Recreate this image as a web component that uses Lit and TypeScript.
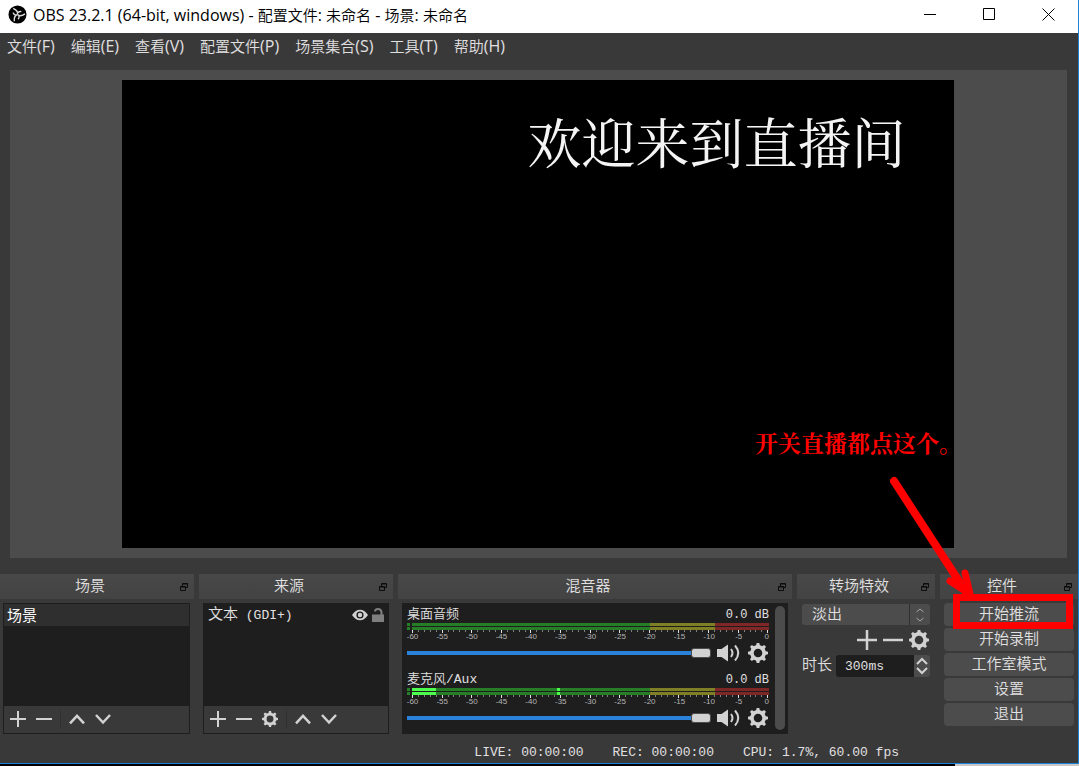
import { LitElement, html, svg, css } from "lit";
import { customElement, property } from "lit/decorators.js";

const icons = {
  plus: html`<svg class="ic" viewBox="0 0 16 16"><path d="M8 0v16M0 8h16" /></svg>`,
  minus: html`<svg class="ic" viewBox="0 0 16 16"><path d="M0 8h16" /></svg>`,
  up: html`<svg class="ic" viewBox="0 0 16 16"><path d="M1 12.300l7-7.500 7 7.500" stroke-width="2.500" /></svg>`,
  down: html`<svg class="ic" viewBox="0 0 16 16"><path d="M1 4l7 7.500 7-7.500" stroke-width="2.500" /></svg>`,
  gear: html`<svg class="ic" viewBox="0 0 20 20">
    <circle cx="10" cy="10" r="6.100" stroke-width="3.600" />
    ${[0, 45, 90, 135, 180, 225, 270, 315].map(
      (a) => svg`<path class="fill" d="M8.700 0h2.600l.9 4h-4.400z" transform="rotate(${a} 10 10)" />`
    )}
  </svg>`,
  speaker: html`<svg class="ic wide" viewBox="0 0 24 20">
    <path class="fill" d="M0 6h4.500L11 1.500v17L4.500 14H0z" />
    <path d="M14 6q3 4 0 8M18 2.500q6.500 7.500 0 15" />
  </svg>`,
  eye: html`<svg class="ic" viewBox="0 0 16 16">
    <path class="fill" fill-rule="evenodd" d="M0 8q3.500-5.300 8-5.300t8 5.300q-3.500 5.300-8 5.300T0 8zM8 4.400a3.600 3.600 0 100 7.200 3.600 3.600 0 100-7.200z" />
    <circle class="fill" cx="8" cy="8" r="2.200" />
  </svg>`,
  lock: html`<svg class="ic dim" viewBox="0 0 14 16">
    <path class="fill" d="M1 7.500h12V15H1z" /><path d="M4 4.500Q4 2 7 2t3.500 3v3" />
  </svg>`,
  float: html`<svg class="float" viewBox="0 0 8 8">
    <path d="M2.500 3V.500h5v4H6M2.500 1h5M.500 3.500h5v4h-5zM.500 4h5" />
  </svg>`,
};

const shared = css`
  * { box-sizing: border-box; }
  button {
    font: inherit; color: inherit; border: 0; padding: 0; background: none;
    display: flex; align-items: center; justify-content: center;
  }
  .ic { display: block; width: 16px; height: 16px; fill: none; stroke: #d2d2d2; stroke-width: 2; overflow: visible; }
  .ic .fill { fill: #d2d2d2; stroke: none; }
  .ic.dim { width: 14px; stroke: #7f7f7f; }
  .ic.dim .fill { fill: #7f7f7f; }
  .big .ic { width: 20px; height: 20px; }
  .big .ic.wide { width: 24px; }
`;

@customElement("obs-dock")
class ObsDock extends LitElement {
  @property() heading = "";
  static styles = [shared, css`
    :host { display: flex; flex-direction: column; min-width: 0; }
    header {
      display: flex; align-items: center; height: 25px; padding-right: 6px;
      background: linear-gradient(#484848, #434343); margin-bottom: 4px;
    }
    h2 { flex: 1; margin: 0; padding-top: 2px; font-size: 15px; font-weight: inherit; text-align: center; }
    .float { display: block; width: 8px; height: 8px; fill: none; stroke: #0c0c0c; }
    .body { flex: 1; display: flex; flex-direction: column; }
  `];
  render() {
    return html`<header><h2>${this.heading}</h2><button aria-label="浮动">${icons.float}</button></header>
      <div class="body"><slot></slot></div>`;
  }
}

@customElement("obs-channel")
class ObsChannel extends LitElement {
  @property() name = "";
  @property({ type: Number }) level = 0;
  @property({ type: Number }) peak = 0;
  static styles = [shared, css`
    :host { display: block; height: 65px; }
    .top { display: flex; justify-content: space-between; height: 20px; padding-top: 2px; font-size: 13px; line-height: 20px; }
    .db { font-size: 12px; }
    .meter { display: grid; grid-template-columns: 3px 1fr; column-gap: 2px; row-gap: 1px; }
    .cap { height: 3px; background: #267f26; }
    .bar {
      position: relative; height: 3px;
      background: linear-gradient(90deg, #267f26 66.667%, #7f7f26 66.667% 85%, #7f2626 85%);
    }
    .level, .peak { position: absolute; top: 0; height: 3px; background: #4cff4c; }
    .level { left: 0; }
    .peak { width: 3px; }
    .ticks { display: flex; justify-content: space-between; align-items: flex-start; margin-left: 5px; height: 3px; }
    .tick { width: 1px; height: 2px; background: #808080; }
    .tick.major { height: 3px; background: #e1e0e1; }
    .marks { display: flex; justify-content: space-between; margin-left: 5px; height: 8px; font: 8px/8px "Liberation Sans", sans-serif; color: #b4b4b4; }
    .mark { width: 1px; display: flex; justify-content: center; white-space: nowrap; }
    .mark:last-child { justify-content: flex-end; }
    .ctl { display: flex; align-items: center; height: 20px; margin-top: 2px; }
    input { appearance: none; flex: 1; min-width: 0; margin: 0 6px 0 0; height: 10px; background: linear-gradient(#2a82da, #2a82da) center / 100% 4px no-repeat; border-radius: 2px; }
    input::-webkit-slider-thumb { appearance: none; width: 20px; height: 10px; background: #d2d2d2; border: 1px solid #4c4c4c; border-radius: 3px; }
    .gear { margin: 0 1px 0 7px; }
  `];
  render() {
    return html`
      <div class="top"><label for="vol">${this.name}</label><span class="db">0.0 dB</span></div>
      <div class="meter">
        ${[0, 1].map(() => html`<div class="cap"></div><div class="bar">
          ${this.level ? html`<div class="level" style="width:${this.level}%"></div>
            <div class="peak" style="left:${this.peak}%"></div>` : ""}
        </div>`)}
      </div>
      <div class="ticks">${Array.from({ length: 61 }, (_, i) => html`<i class="tick ${i % 5 ? "" : "major"}"></i>`)}</div>
      <div class="marks">${Array.from({ length: 13 }, (_, i) => html`<span class="mark">${i * 5 - 60}</span>`)}</div>
      <div class="ctl big">
        <input id="vol" type="range" min="0" max="100" value="100" />
        <button aria-label="静音">${icons.speaker}</button>
        <button class="gear" aria-label="设置">${icons.gear}</button>
      </div>`;
  }
}

/* Wraps the Latin runs of a mixed string so that they can be sized apart from the Chinese ones. */
const mixed = (text: string) =>
  text.split(/([\x20-\x7e]+)/).filter(Boolean).map((run) => (/^[\x20-\x7e]/.test(run) ? html`<span class="ui-latin">${run}</span>` : run));

@customElement("app-root")
class AppRoot extends LitElement {
  static styles = [shared, css`
    :host {
      display: flex; flex-direction: column; height: 100vh; overflow: hidden; position: relative;
      background: #000; color: #e1e0e1; font: 350 15px/20px "Liberation Mono", "Noto Sans CJK SC", monospace;
    }
    .window { flex: 1; min-height: 0; display: flex; flex-direction: column; background: #3a393a; border-right: 1px solid #1a81d4; border-bottom: 1px solid #1a81d4; }
    .title { display: flex; align-items: center; height: 33px; padding: 0 23px 4px 8px; background: #fff; color: #000; font-family: "Noto Sans", "Noto Sans CJK SC", sans-serif; }
    h1 { flex: 1; margin: 0 0 0 6px; font-size: 15px; line-height: 20px; font-weight: 350; white-space: pre; }
    .ui-latin { font-size: 16px; line-height: 16px; font-family: "Open Sans", sans-serif; font-weight: 400; }
    .logo { width: 19px; height: 19px; }
    .wins { display: flex; gap: 46px; }
    .wins svg { display: block; width: 13px; height: 13px; fill: none; stroke: #000; }
    .menu { display: flex; gap: 16px; padding: 3px 7px; height: 37px; font-family: "Noto Sans", "Noto Sans CJK SC", sans-serif; }
    .menu button { display: block; height: 20px; white-space: nowrap; }
    .preview { flex: 1; min-height: 0; margin: 0 11px 16px 10px; padding: 10px 12px 10px 10px; background: #4c4c4c; display: flex; justify-content: center; }
    .canvas { height: 100%; aspect-ratio: 16 / 9; background: #000; padding: 31px 48px; text-align: right; font: 400 54px/60px "Noto Serif CJK SC", "Noto Sans CJK SC", serif; color: #f4f4f4; }
    .docks { display: grid; grid-template-columns: 194fr 194fr 394fr 138fr 138fr; gap: 5px; }
    .panel { flex: 1; display: flex; flex-direction: column; margin: 0 4px 0 3px; border: 1px solid #1f1e1f; background: #1f1e1f; }
    .sources { margin: 0 4px; }
    .row { display: flex; align-items: center; height: 22px; padding: 0 4px; }
    .row.on { padding: 0 3px; background: #2f2f2f; color: #fff; font-family: "Noto Sans CJK SC", sans-serif; font-weight: 400; }
    .row .label { flex: 1; padding-top: 2px; white-space: pre; }
    .latin { font-size: 13px; }
    .row .ic.dim { margin-left: 3px; }
    .sources .row { padding-right: 3px; }
    .tools { margin-top: auto; display: flex; align-items: center; height: 27px; padding: 0 0 1px 6px; gap: 10px; background: #3a393a; }
    .sep { width: 1px; height: 19px; background: #303030; margin: 0 -2px; }
    .mixer { flex: 1; display: flex; gap: 6px; margin: 0 4px; padding: 0 3px 0 5px; background: #1f1e1f; }
    .channels { flex: 1; min-width: 0; height: 131px; }
    .scroll { width: 10px; margin: 3px 0 4px; border-radius: 5px; background: #4c4c4c; }
    .trans { display: flex; flex-direction: column; padding: 1px 5px; }
    .combo { display: flex; position: relative; }
    select { appearance: none; width: 100%; height: 21px; border: 0; border-radius: 3px; padding: 2px 10px 0; font: inherit; color: inherit; background: linear-gradient(90deg, #303030, #303030) right 20px top / 1px 100% no-repeat #4c4c4c; }
    .arrows { position: absolute; right: 6px; top: 4px; width: 8px; height: 14px; fill: none; stroke: #a8a8a8; pointer-events: none; }
    .tbtns { display: flex; justify-content: flex-end; gap: 6px; margin: 5px 0; padding-right: 1px; }
    .dur { display: flex; align-items: center; gap: 4px; position: relative; }
    .dur label { padding-top: 2px; }
    .dur input { flex: 1; min-width: 0; width: 0; height: 22px; border: 0; border-radius: 3px; padding: 0 9px; font: inherit; font-size: 13px; color: inherit; background: linear-gradient(#4c4c4c, #4c4c4c) right / 16px 100% no-repeat #1f1e1f; }
    .spin { position: absolute; right: 2px; top: 2px; width: 12px; height: 18px; fill: none; stroke: #d2d2d2; stroke-width: 2; }
    .ctrls { display: flex; flex-direction: column; gap: 2px; padding: 0 4px; }
    .ctrls button { height: 23px; padding-top: 2px; background: #4c4c4c; border-radius: 4px; }
    .status { display: flex; justify-content: flex-end; gap: 29px; height: 29px; padding: 9px 179px 0 0; font-size: 13px; white-space: pre; }
    .edge { height: 2px; background: linear-gradient(90deg, #000 88.500%, #c8c8c8 88.500%); }
    .note { position: absolute; left: 755px; top: 431px; color: #f00; font: 700 23px/24px "Noto Serif CJK SC", "Noto Sans CJK SC", serif; }
    .ink { position: absolute; left: 880px; top: 470px; width: 199px; height: 165px; pointer-events: none; fill: none; stroke: #f00; stroke-width: 7; }
  `];
  render() {
    return html`
      <div class="window">
        <div class="title">
          <svg class="logo" viewBox="0 0 20 20">
            <circle cx="10" cy="10" r="9.500" />
            <g fill="none" stroke="#ddd" stroke-width="1.500">
              ${[0, 120, 240].map((a) => svg`<path d="M10 10Q11 6 5.500 3.500M10.500 7.800Q12.500 6.500 14 7" transform="rotate(${a} 10 10)" />`)}
            </g>
          </svg>
          <h1>${mixed("OBS 23.2.1 (64-bit, windows) - 配置文件: 未命名 - 场景: 未命名")}</h1>
          <div class="wins">
            <button aria-label="最小化"><svg viewBox="0 0 13 13"><path d="M0 6.500h12" /></svg></button>
            <button aria-label="最大化"><svg viewBox="0 0 13 13"><path d="M.500 .500h11v11h-11z" /></svg></button>
            <button aria-label="关闭"><svg viewBox="0 0 13 13"><path d="M.500 .500l12 12M12.500 .500l-12 12" /></svg></button>
          </div>
        </div>
        <nav class="menu">
          ${["文件(F)", "编辑(E)", "查看(V)", "配置文件(P)", "场景集合(S)", "工具(T)", "帮助(H)"].map((m) => html`<button>${mixed(m)}</button>`)}
        </nav>
        <main class="preview"><div class="canvas">欢迎来到直播间</div></main>
        <section class="docks">
          <obs-dock heading="场景">
            <div class="panel">
              <div class="row on">场景</div>
              <div class="tools">
                <button aria-label="添加">${icons.plus}</button><button aria-label="移除">${icons.minus}</button>
                <i class="sep"></i>
                <button aria-label="上移">${icons.up}</button><button aria-label="下移">${icons.down}</button>
              </div>
            </div>
          </obs-dock>
          <obs-dock heading="来源">
            <div class="panel sources">
              <div class="row">
                <span class="label">文本<span class="latin"> (GDI+)</span></span>
                <button aria-label="可见">${icons.eye}</button><button aria-label="锁定">${icons.lock}</button>
              </div>
              <div class="tools">
                <button aria-label="添加">${icons.plus}</button><button aria-label="移除">${icons.minus}</button>
                <button aria-label="属性">${icons.gear}</button>
                <i class="sep"></i>
                <button aria-label="上移">${icons.up}</button><button aria-label="下移">${icons.down}</button>
              </div>
            </div>
          </obs-dock>
          <obs-dock heading="混音器">
            <div class="mixer">
              <div class="channels">
                <obs-channel name="桌面音频"></obs-channel>
                <obs-channel name="麦克风/Aux" level="6.7" peak="40.6"></obs-channel>
              </div>
              <div class="scroll"></div>
            </div>
          </obs-dock>
          <obs-dock heading="转场特效">
            <div class="trans">
              <div class="combo">
                <select aria-label="转场特效"><option>淡出</option></select>
                <svg class="arrows" viewBox="0 0 8 14"><path d="M.500 4L4 1l3.500 3M.500 10L4 13l3.500-3" /></svg>
              </div>
              <div class="tbtns big">
                <button aria-label="添加">${icons.plus}</button><button aria-label="移除">${icons.minus}</button>
                <button aria-label="属性">${icons.gear}</button>
              </div>
              <div class="dur">
                <label for="dur">时长</label><input id="dur" value="300ms" />
                <svg class="spin" viewBox="0 0 12 18"><path d="M1 7l5-5 5 5M1 11l5 5 5-5" /></svg>
              </div>
            </div>
          </obs-dock>
          <obs-dock heading="控件">
            <div class="ctrls">
              ${["开始推流", "开始录制", "工作室模式", "设置", "退出"].map((b) => html`<button>${b}</button>`)}
            </div>
          </obs-dock>
        </section>
        <footer class="status"><span>LIVE: 00:00:00</span><span>REC: 00:00:00</span><span>CPU: 1.7%, 60.00 fps</span></footer>
      </div>
      <div class="edge"></div>
      <div class="note">开关直播都点这个。</div>
      <svg class="ink" viewBox="880 470 199 165">
        <path d="M956.500 597.500h113v28h-113z" />
        <path d="M894 481L966 592" stroke-width="8" stroke-linecap="round" />
        <path d="M950 581L970 594 965 573" stroke-linecap="round" stroke-linejoin="round" />
      </svg>`;
  }
}
